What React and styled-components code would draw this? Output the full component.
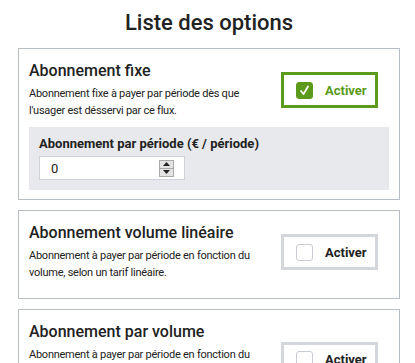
import React from 'react';
import styled, { createGlobalStyle } from 'styled-components';

const GlobalStyle = createGlobalStyle`
  body {
    margin: 0;
    background: #fff;
    font-family: Roboto, "Liberation Sans", sans-serif;
    color: #222;
  }
`;

const Page = styled.div`
  padding: 10px 15px 0 18px;
`;

const Title = styled.h1`
  margin: 0 0 12px;
  font-size: 22px;
  line-height: 26px;
  font-weight: 500;
  text-align: center;
  color: #222;
`;

const List = styled.div`
  display: flex;
  flex-direction: column;
  gap: 10px;
`;

const Card = styled.div`
  border: 1px solid #b6bdc7;
  padding: 12px 10px 9px;
`;

const Header = styled.div`
  display: flex;
  align-items: center;
  justify-content: space-between;
  margin-bottom: 8px;
`;

const Info = styled.div`
  width: 236px;
`;

const CardTitle = styled.h2`
  margin: 0 0 4px;
  font-size: 16px;
  line-height: 20px;
  font-weight: 500;
`;

const Desc = styled.p`
  margin: 0;
  font-size: 11px;
  letter-spacing: -0.25px;
  line-height: 17px;
`;

const Toggle = styled.label`
  display: flex;
  align-items: center;
  gap: 12px;
  width: 91px;
  height: 30px;
  box-sizing: content-box;
  margin-right: 11px;
  border: 3px solid ${(p) => (p.$on ? '#5b9a1b' : '#d3d6db')};
  color: ${(p) => (p.$on ? '#5b9a1b' : '#222')};
  font-size: 13px;
  font-weight: 700;
  cursor: pointer;
`;

const Box = styled.span`
  display: flex;
  align-items: center;
  justify-content: center;
  margin-left: 12px;
  width: 17px;
  height: 17px;
  box-sizing: border-box;
  border-radius: 3px;
  background: ${(p) => (p.$on ? '#5b9a1b' : '#fff')};
  border: 1px solid ${(p) => (p.$on ? '#5b9a1b' : '#c9cdd3')};
`;

const Panel = styled.div`
  background: #e8e9ec;
  padding: 8px 10px 10px;
`;

const FieldLabel = styled.div`
  font-size: 13px;
  line-height: 18px;
  font-weight: 700;
  margin-bottom: 3px;
`;

const NumberBox = styled.div`
  display: flex;
  align-items: center;
  justify-content: space-between;
  width: 146px;
  height: 24px;
  box-sizing: border-box;
  background: #fff;
  border: 1px solid #d0d4da;
  padding: 0 10px 0 11px;
  font-size: 13px;
`;

const Spinner = styled.div`
  display: flex;
  flex-direction: column;
  width: 15px;
  height: 17px;
  box-sizing: border-box;
  border: 1px solid #a9a9a9;
  background: #e4e4e4;
`;

const SpinHalf = styled.span`
  flex: 1;
  display: flex;
  align-items: center;
  justify-content: center;
  & + & {
    border-top: 1px solid #a9a9a9;
  }
`;

const Check = () => (
  <svg width="11" height="11" viewBox="0 0 11 11">
    <path d="M2 6 L4.5 9 L9 1.5" fill="none" stroke="#fff" strokeWidth="1.8" strokeLinecap="round" strokeLinejoin="round" />
  </svg>
);

const Arrow = ({ up }) => (
  <svg width="7" height="4" viewBox="0 0 7 4">
    <path d={up ? 'M0 4 L3.5 0 L7 4 Z' : 'M0 0 L3.5 4 L7 0 Z'} fill="#222" />
  </svg>
);

const options = [
  {
    title: 'Abonnement fixe',
    desc: "Abonnement fixe à payer par période dès que l'usager est désservi par ce flux.",
    on: true,
    field: 'Abonnement par période (€ / période)',
  },
  {
    title: 'Abonnement volume linéaire',
    desc: 'Abonnement à payer par période en fonction du volume, selon un tarif linéaire.',
    on: false,
  },
  {
    title: 'Abonnement par volume',
    desc: 'Abonnement à payer par période en fonction du volume, selon un tarif par tranches de volume consommé.',
    on: false,
  },
];

const Option = ({ title, desc, on, field }) => (
  <Card>
    <Header>
      <Info>
        <CardTitle>{title}</CardTitle>
        <Desc>{desc}</Desc>
      </Info>
      <Toggle $on={on}>
        <Box $on={on}>{on && <Check />}</Box>
        Activer
      </Toggle>
    </Header>
    {field && (
      <Panel>
        <FieldLabel>{field}</FieldLabel>
        <NumberBox>
          <span>0</span>
          <Spinner>
            <SpinHalf><Arrow up /></SpinHalf>
            <SpinHalf><Arrow /></SpinHalf>
          </Spinner>
        </NumberBox>
      </Panel>
    )}
  </Card>
);

const App = () => (
  <Page>
    <GlobalStyle />
    <Title>Liste des options</Title>
    <List>
      {options.map((o) => (
        <Option key={o.title} {...o} />
      ))}
    </List>
  </Page>
);

export default App;
